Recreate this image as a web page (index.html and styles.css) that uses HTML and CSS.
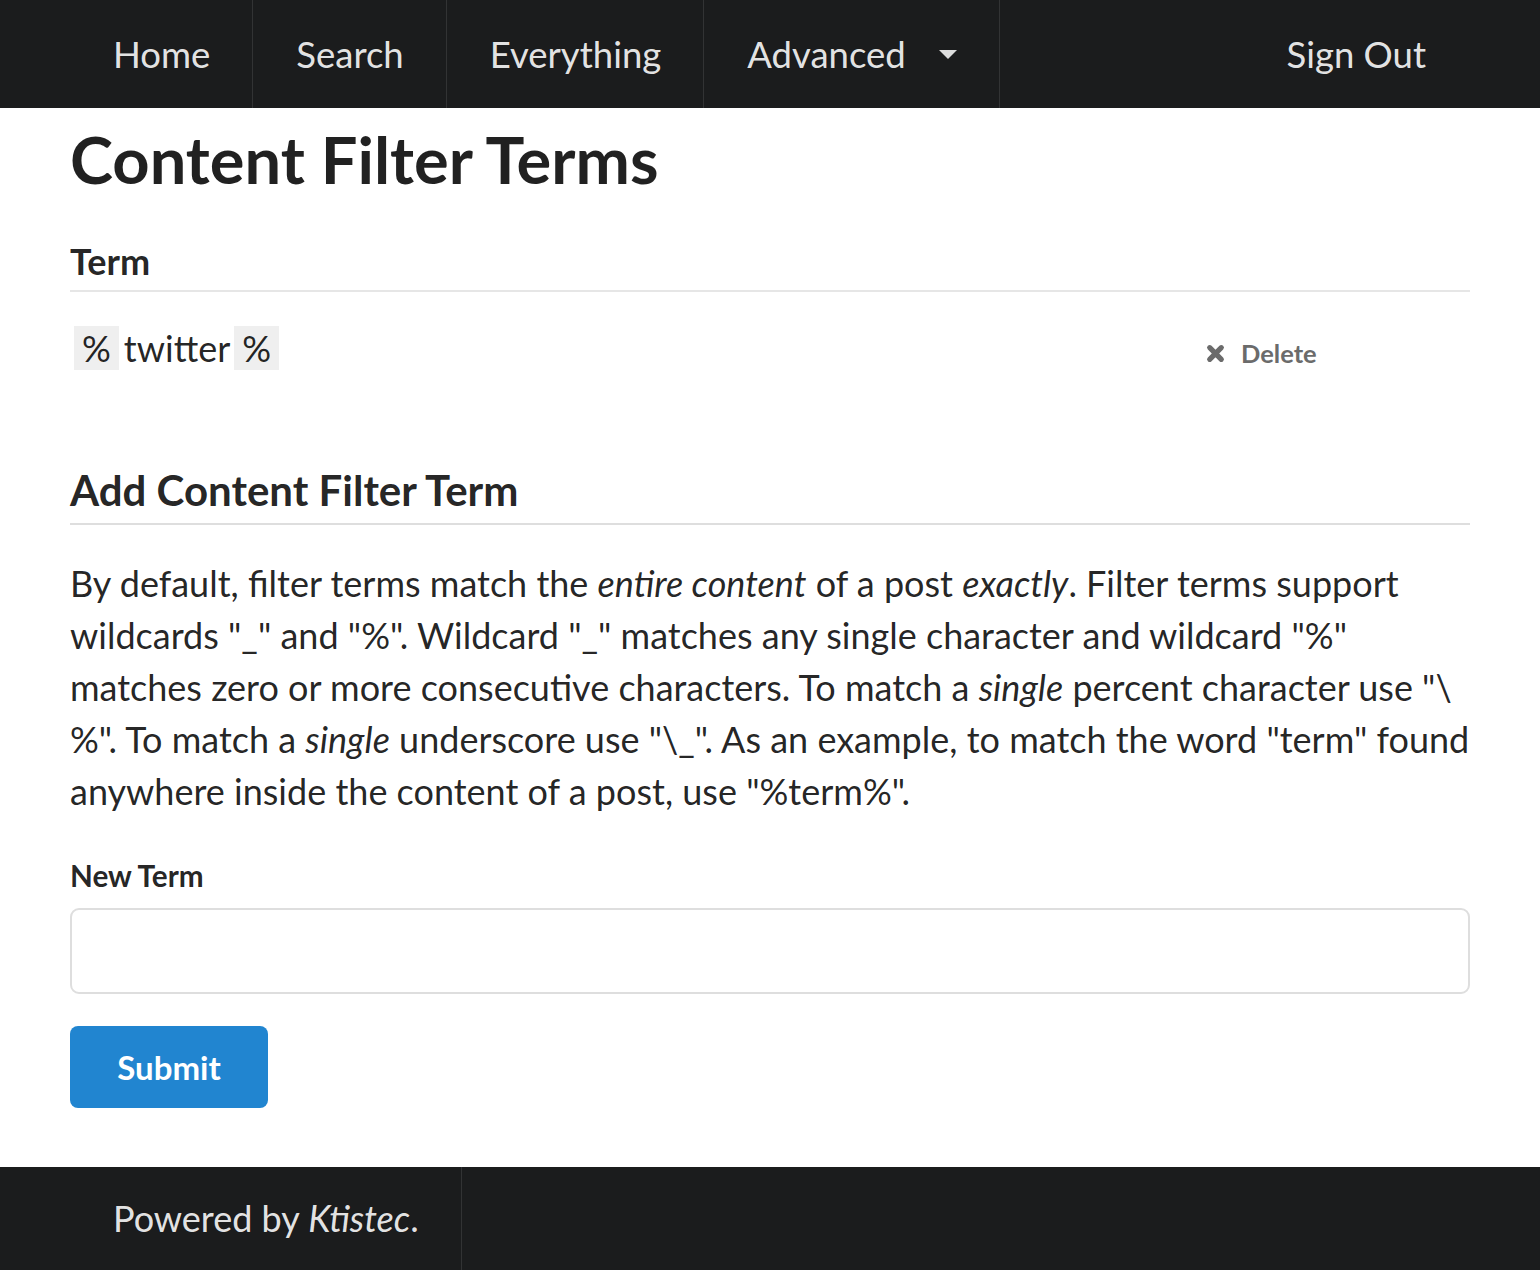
FILE: index.html
```html
<!DOCTYPE html>
<html>
<head>
<meta charset="utf-8">
<link rel="stylesheet" href="styles.css">
</head>
<body>
<nav class="topbar">
  <div class="container menu">
    <a class="item divided">Home</a>
    <a class="item divided">Search</a>
    <a class="item divided">Everything</a>
    <a class="item divided dropdown">Advanced <span class="caret"></span></a>
    <a class="item right">Sign Out</a>
  </div>
</nav>
<main class="container content">
  <h1 class="title">Content Filter Terms</h1>
  <table class="terms">
    <thead>
      <tr><th>Term</th><th></th></tr>
    </thead>
    <tbody>
      <tr>
        <td class="term"><span class="wild">%</span>twitter<span class="wild">%</span></td>
        <td class="actions">
          <button class="delete"><svg class="x" viewBox="0 0 20 20" width="20" height="20"><path d="M4.5 4.5 L15.5 15.5 M15.5 4.5 L4.5 15.5" stroke="#6b6b6b" stroke-width="5" stroke-linecap="round" fill="none"/></svg>Delete</button>
        </td>
      </tr>
    </tbody>
  </table>
  <h3 class="subtitle">Add Content Filter Term</h3>
  <p class="help">By default, filter terms match the <em>entire content</em> of a post <em>exactly</em>. Filter terms support wildcards "_" and "%". Wildcard "_" matches any single character and wildcard "%" matches zero or more consecutive characters. To match a <em>single</em> percent character use "\<wbr>%". To match a <em>single</em> underscore use "\_". As an example, to match the word "term" found anywhere inside the content of a post, use "%term%".</p>
  <form class="form">
    <label class="label">New Term</label>
    <input class="input" type="text">
    <button class="submit" type="button">Submit</button>
  </form>
</main>
<footer class="footer">
  <div class="container menu">
    <span class="item divided">Powered by&nbsp;<em>Ktistec</em>.</span>
  </div>
</footer>
</body>
</html>
```
FILE: styles.css
```css
html, body {
  margin: 0;
  padding: 0;
  background: #fff;
  font-family: Lato, "Helvetica Neue", Arial, sans-serif;
  color: rgba(0,0,0,.87);
}
.container {
  margin: 0 70px;
}
.topbar, .footer {
  background: #1b1c1d;
}
.menu {
  display: flex;
  align-items: stretch;
  height: 108px;
}
.item {
  display: flex;
  align-items: center;
  padding: 0 42px 0 43px;
  color: rgba(255,255,255,.9);
  font-size: 36.5px;
  text-decoration: none;
}
.divided {
  border-right: 1px solid rgba(255,255,255,.1);
}
.right {
  margin-left: auto;
  padding-right: 44px;
}
.caret {
  display: inline-block;
  width: 0;
  height: 0;
  margin-left: 33px;
  border-left: 9px solid transparent;
  border-right: 9px solid transparent;
  border-top: 9px solid rgba(255,255,255,.85);
}
.content {
  padding-bottom: 59px;
}
.title {
  font-size: 65px;
  font-weight: 700;
  line-height: 1.28;
  margin: 0;
  padding-top: 10px;
}
.terms {
  width: 100%;
  border-collapse: collapse;
  margin-top: 38px;
}
.terms th {
  text-align: left;
  font-size: 36px;
  font-weight: 700;
  padding: 0 0 7px;
  border-bottom: 2px solid #e6e6e6;
}
.terms td {
  padding: 34px 0 76px;
  vertical-align: top;
}
.term {
  font-size: 36px;
  line-height: 44px;
}
.wild {
  display: inline-block;
  background: #efefef;
  padding: 0 8px;
  margin: 0 5px 0 4px;
}
.actions {
  width: 265px;
}
.delete {
  display: flex;
  align-items: center;
  gap: 15px;
  border: 0;
  background: none;
  padding: 12px 0 0;
  font-family: Lato, sans-serif;
  font-size: 25.5px;
  font-weight: 700;
  color: #6b6b6b;
}
.x {
  width: 21px;
  height: 21px;
}
.subtitle {
  font-size: 42px;
  font-weight: 700;
  margin: 0;
  padding: 18px 0 5px;
  line-height: 1.28;
  border-bottom: 2px solid #dedede;
}
.help {
  font-size: 36px;
  line-height: 52px;
  margin: 32px 0 0;
}
.form {
  margin-top: 39px;
  display: flex;
  flex-direction: column;
  align-items: flex-start;
}
.label {
  font-size: 29.7px;
  font-weight: 700;
  line-height: 40px;
  margin-bottom: 12px;
}
.input {
  box-sizing: border-box;
  width: 100%;
  height: 86px;
  border: 2px solid #dedede;
  border-radius: 9px;
  font-family: Lato, sans-serif;
  font-size: 32px;
  padding: 0 28px;
  outline: none;
}
.submit {
  margin-top: 32px;
  width: 198px;
  height: 82px;
  border: 0;
  border-radius: 8px;
  background: #2185d0;
  color: #fff;
  font-family: Lato, sans-serif;
  font-size: 33px;
  font-weight: 700;
}
.footer .menu {
  height: 103px;
}
.footer .item {
  font-size: 36px;
}
```
